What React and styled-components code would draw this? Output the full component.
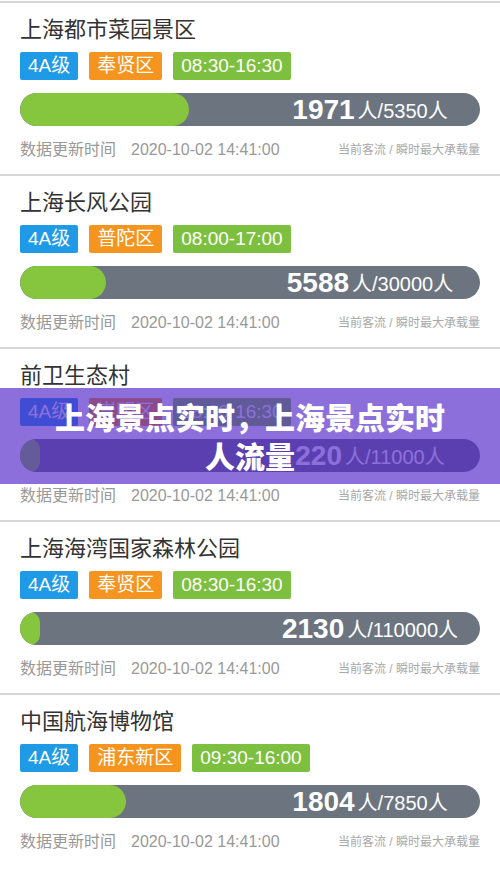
import React from 'react';
import styled, { createGlobalStyle } from 'styled-components';

const spots = [
  { name: '上海都市菜园景区', district: '奉贤区', hours: '08:30-16:30', now: 1971, max: 5350 },
  { name: '上海长风公园', district: '普陀区', hours: '08:00-17:00', now: 5588, max: 30000 },
  { name: '前卫生态村', district: '崇明区', hours: '08:30-16:30', now: 220, max: 11000 },
  { name: '上海海湾国家森林公园', district: '奉贤区', hours: '08:30-16:30', now: 2130, max: 110000 },
  { name: '中国航海博物馆', district: '浦东新区', hours: '09:30-16:00', now: 1804, max: 7850 },
];

const BAR_WIDTH = 460;

const fillWidth = (now, max) => Math.max(20, Math.round((now / max) * BAR_WIDTH));

const App = () => (
  <Page>
    <GlobalStyle />
    {spots.map(spot => (
      <Card key={spot.name}>
        <Title>{spot.name}</Title>
        <Tags>
          <Tag color="#1f9ae6">4A级</Tag>
          <Tag color="#f5951f">{spot.district}</Tag>
          <Tag color="#7dc03f">{spot.hours}</Tag>
        </Tags>
        <Bar>
          <Fill style={{ width: fillWidth(spot.now, spot.max) }} />
          <BarLabel>
            <Count>{spot.now}</Count>
            <Capacity>人/{spot.max}人</Capacity>
          </BarLabel>
        </Bar>
        <Footer>
          <Updated>
            数据更新时间<Stamp>2020-10-02 14:41:00</Stamp>
          </Updated>
          <Legend>当前客流 / 瞬时最大承载量</Legend>
        </Footer>
      </Card>
    ))}
    <Banner>上海景点实时，上海景点实时人流量</Banner>
  </Page>
);

const GlobalStyle = createGlobalStyle`
  body {
    margin: 0;
    background: #ffffff;
    font-family: "Liberation Sans", "Noto Sans CJK SC", sans-serif;
  }
`;

const Page = styled.div`
  position: relative;
  width: 500px;
  height: 872px;
  overflow: hidden;
  padding-top: 1px;
  box-sizing: border-box;
  background: #ffffff;
`;

const Card = styled.div`
  height: 173px;
  box-sizing: border-box;
  border-top: 2px solid #d6d6d6;
  padding: 12px 20px 0;
  display: flex;
  flex-direction: column;
  &:last-of-type {
    height: 175px;
    border-bottom: 2px solid #d6d6d6;
  }
`;

const Title = styled.div`
  font-size: 22px;
  line-height: 30px;
  color: #333333;
`;

const Tags = styled.div`
  display: flex;
  gap: 11px;
  margin-top: 7px;
`;

const Tag = styled.div`
  height: 28px;
  line-height: 28px;
  padding: 0 8px;
  border-radius: 2px;
  background: ${p => p.color};
  color: #ffffff;
  font-size: 19px;
`;

const Bar = styled.div`
  position: relative;
  margin-top: 13px;
  height: 33px;
  border-radius: 17px;
  background: #6c7480;
  overflow: hidden;
`;

const Fill = styled.div`
  position: absolute;
  left: 0;
  top: 0;
  bottom: 0;
  border-radius: 17px;
  background: #86c53e;
`;

const BarLabel = styled.div`
  position: relative;
  height: 100%;
  margin-left: 240px;
  display: flex;
  align-items: center;
  justify-content: center;
  gap: 3px;
  color: #ffffff;
`;

const Count = styled.span`
  font-size: 28px;
  font-weight: 700;
`;

const Capacity = styled.span`
  font-size: 20px;
`;

const Footer = styled.div`
  margin-top: 12px;
  height: 20px;
  display: flex;
  align-items: center;
  justify-content: space-between;
`;

const Updated = styled.div`
  font-size: 16px;
  color: #999999;
`;

const Stamp = styled.span`
  margin-left: 15px;
`;

const Legend = styled.div`
  font-size: 12px;
  color: #a8a8a8;
`;

const Banner = styled.div`
  position: absolute;
  left: 0;
  right: 0;
  top: 388px;
  height: 96px;
  padding: 0 50px;
  box-sizing: border-box;
  display: flex;
  align-items: center;
  justify-content: center;
  text-align: center;
  background: rgba(82, 36, 200, 0.66);
  color: #ffffff;
  font-family: "Noto Sans CJK SC", sans-serif;
  font-size: 30px;
  font-weight: 900;
  line-height: 39px;
`;

export default App;
